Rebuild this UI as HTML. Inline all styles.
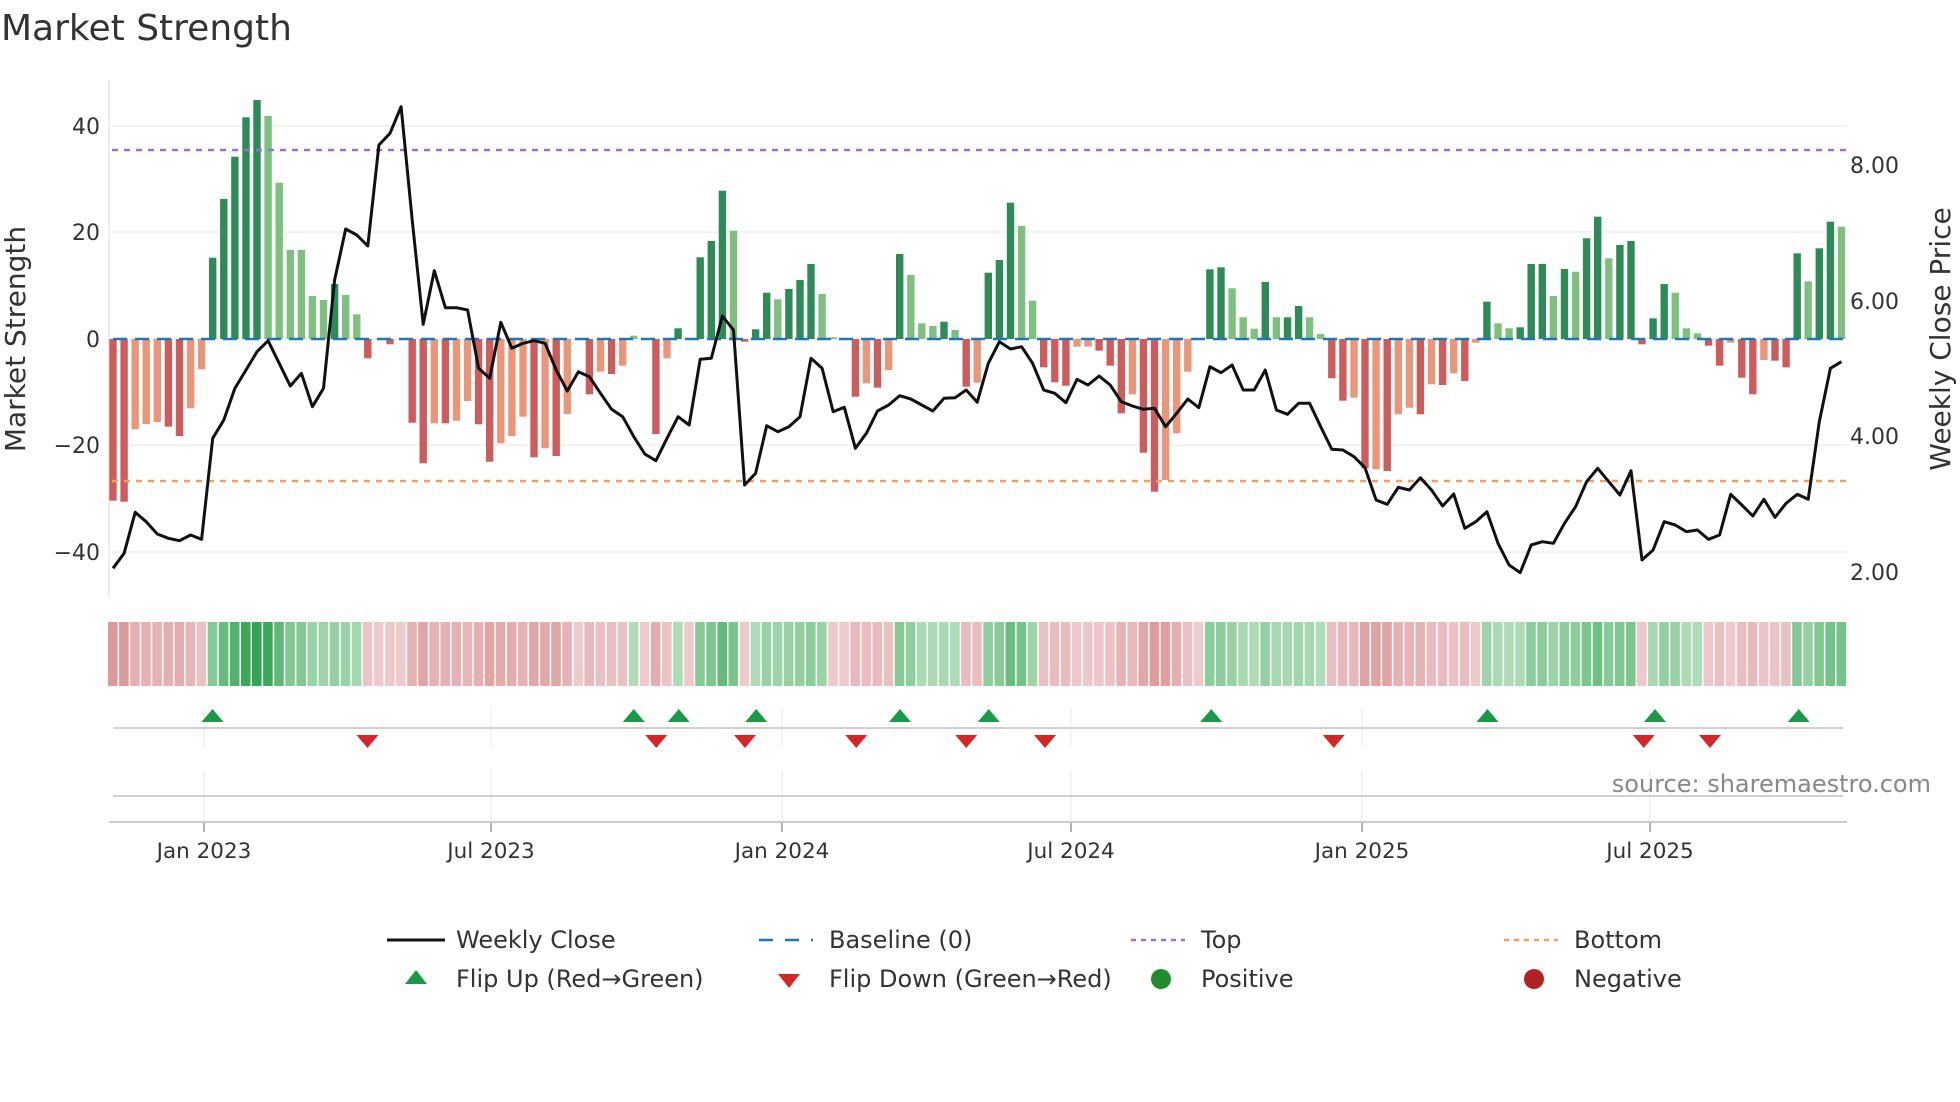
<!DOCTYPE html>
<html><head><meta charset="utf-8"><style>
html,body{margin:0;padding:0;background:#fff;}
svg{display:block;font-family:"DejaVu Sans","Liberation Sans",sans-serif;}
</style></head><body>
<svg id="s" width="1960" height="1102" viewBox="0 0 1960 1102" xmlns="http://www.w3.org/2000/svg">
<text x="1" y="40" font-size="36" fill="#333">Market Strength</text>
<g id="g"></g>
</svg>
<script>
const bars=[[1262,'r'],[1265,'r'],[1048,'o'],[1032,'o'],[1026,'o'],[1040,'r'],[1068,'r'],[985,'o'],[868,'o'],[533,'d'],[357,'d'],[230,'d'],[112,'d'],[60,'d'],[108,'l'],[308,'l'],[510,'l'],[510,'l'],[648,'l'],[660,'l'],[612,'d'],[645,'l'],[703,'l'],[835,'r'],[777,'n'],[793,'r'],[777,'n'],[1028,'r'],[1150,'r'],[1030,'o'],[1030,'r'],[1022,'o'],[963,'o'],[1033,'r'],[1145,'r'],[1090,'o'],[1068,'o'],[1010,'o'],[1132,'r'],[1105,'o'],[1128,'r'],[1002,'o'],[777,'n'],[943,'r'],[875,'o'],[882,'r'],[857,'o'],[767,'l'],[777,'n'],[1062,'r'],[835,'o'],[745,'d'],[777,'n'],[532,'d'],[483,'d'],[332,'d'],[452,'l'],[785,'r'],[748,'d'],[638,'d'],[658,'l'],[627,'d'],[600,'d'],[552,'d'],[642,'l'],[772,'l'],[777,'n'],[950,'r'],[910,'o'],[923,'r'],[870,'o'],[522,'d'],[585,'l'],[730,'l'],[738,'l'],[725,'d'],[750,'l'],[920,'r'],[908,'o'],[578,'d'],[540,'d'],[368,'d'],[438,'l'],[662,'l'],[862,'r'],[907,'r'],[917,'r'],[800,'o'],[800,'o'],[812,'r'],[857,'r'],[1000,'r'],[943,'o'],[1118,'r'],[1235,'r'],[1200,'o'],[1060,'o'],[875,'o'],[777,'n'],[568,'d'],[562,'d'],[625,'l'],[712,'l'],[746,'l'],[606,'d'],[712,'l'],[712,'d'],[678,'d'],[712,'l'],[762,'l'],[895,'r'],[962,'r'],[953,'o'],[1165,'r'],[1168,'o'],[1173,'r'],[1003,'o'],[983,'o'],[1003,'r'],[913,'o'],[915,'r'],[880,'o'],[903,'r'],[788,'o'],[665,'d'],[730,'l'],[745,'l'],[742,'d'],[552,'d'],[552,'d'],[648,'l'],[567,'d'],[575,'l'],[475,'d'],[410,'d'],[535,'l'],[495,'d'],[483,'d'],[793,'r'],[715,'d'],[612,'d'],[638,'l'],[745,'l'],[760,'l'],[797,'r'],[857,'r'],[788,'o'],[893,'r'],[943,'r'],[840,'o'],[842,'r'],[862,'r'],[520,'d'],[604,'l'],[505,'d'],[425,'d'],[440,'l']];
const line=[1465,1420,1297,1325,1362,1375,1382,1365,1378,1075,1020,925,870,815,782,850,918,880,980,925,600,447,465,498,195,160,80,420,733,572,683,683,690,865,895,727,805,790,782,790,870,933,875,890,940,988,1010,1070,1122,1142,1075,1010,1035,838,835,708,750,1215,1180,1037,1055,1040,1010,835,865,995,982,1105,1060,993,975,947,957,975,993,955,953,930,967,850,785,807,800,850,930,940,968,898,915,888,915,965,978,988,985,1040,1000,957,983,860,878,855,930,930,870,990,1003,970,970,1040,1108,1110,1130,1163,1260,1273,1222,1230,1193,1230,1278,1242,1345,1325,1295,1390,1455,1478,1395,1385,1390,1330,1280,1205,1165,1205,1245,1172,1440,1410,1325,1335,1355,1350,1378,1365,1243,1275,1308,1258,1312,1270,1243,1258,1025,865,845];
const col={r:'#cd5c5c',o:'#e9967a',d:'#2e8b57',l:'#7fbf7f'};
const X=i=>113+i*11.08;
let h='';
const L=109,R=1847;
[126,232,339,445,552].forEach(y=>h+=`<line x1="${L}" x2="${R}" y1="${y}" y2="${y}" stroke="#eceff3" stroke-width="1.5"/>`);
h+=`<line x1="${L}" x2="${L}" y1="80" y2="598" stroke="#e6e9ee" stroke-width="1.5"/>`;
[['40',126],['20',232],['0',339],['\u221220',445],['\u221240',552]].forEach(([t,y])=>h+=`<text x="100" y="${y+8}" font-size="22" fill="#333" text-anchor="end">${t}</text>`);
[['8.00',165],['6.00',301],['4.00',436],['2.00',572]].forEach(([t,y])=>h+=`<text x="1850" y="${y+8}" font-size="22" fill="#333">${t}</text>`);
h+=`<text transform="translate(25,339) rotate(-90)" font-size="28" fill="#333" text-anchor="middle">Market Strength</text>`;
h+=`<text transform="translate(1950,339) rotate(-90)" font-size="28" fill="#333" text-anchor="middle">Weekly Close Price</text>`;
bars.forEach(([zy,c],i)=>{if(c==='n')return;const y=80+zy/3;const x=X(i)-3.7;const t=Math.min(y,339),hh=Math.abs(y-339);h+=`<rect x="${x.toFixed(1)}" y="${t.toFixed(1)}" width="7.4" height="${Math.max(hh,1.5).toFixed(1)}" fill="${col[c]}"/>`;});
h+=`<line x1="${L+4}" x2="${R-4}" y1="339" y2="339" stroke="#1f77b4" stroke-width="2.5" stroke-dasharray="14,8"/>`;
h+=`<line x1="${L+3}" x2="${R}" y1="150" y2="150" stroke="#9b6fd6" stroke-width="2.5" stroke-dasharray="6,6"/>`;
h+=`<line x1="${L+3}" x2="${R}" y1="481" y2="481" stroke="#f0a060" stroke-width="2.5" stroke-dasharray="6,6"/>`;
h+=`<polyline fill="none" stroke="#111" stroke-width="3" stroke-linejoin="round" points="${line.map((v,i)=>X(i).toFixed(1)+','+(80+v/3).toFixed(1)).join(' ')}"/>`;
bars.forEach(([zy,c],i)=>{const v=(777-zy)/3/5.33;let a=Math.min(1,Math.abs(v)/45);let f;
 if(v>=0.5){const k=0.25+a*0.75;f=`rgb(${Math.round(220-k*170)},${Math.round(240-k*75)},${Math.round(222-k*140)})`;}
 else{const k=0.2+a*0.8;f=`rgb(${Math.round(243-k*30)},${Math.round(220-k*90)},${Math.round(222-k*92)})`;}
 h+=`<rect x="${(X(i)-5).toFixed(1)}" y="622" width="9.6" height="64" fill="${f}"/>`;});
const ticks=[['Jan 2023',204],['Jul 2023',491],['Jan 2024',782],['Jul 2024',1071],['Jan 2025',1362],['Jul 2025',1650]];
ticks.forEach(([t,x])=>{h+=`<line x1="${x}" x2="${x}" y1="708" y2="746" stroke="#eef0f3" stroke-width="1.5"/><line x1="${x}" x2="${x}" y1="770" y2="822" stroke="#eef0f3" stroke-width="1.5"/><line x1="${x}" x2="${x}" y1="822" y2="832" stroke="#999" stroke-width="1.5"/><text x="${x}" y="858" font-size="21.5" fill="#333" text-anchor="middle">${t}</text>`;});
h+=`<line x1="113" x2="1843" y1="728" y2="728" stroke="#d0d0d0" stroke-width="2"/>`;
h+=`<line x1="113" x2="1843" y1="796" y2="796" stroke="#d0d0d0" stroke-width="2"/>`;
h+=`<line x1="109" x2="1847" y1="822" y2="822" stroke="#ccc" stroke-width="2"/>`;
[170,507,543,605,720,791,969,1190,1324,1439].forEach(d=>{const x=d*1.25;h+=`<polygon points="${x-11},${722} ${x+11},${722} ${x},${709}" fill="#1a9a47"/>`;});
[294,525,596,685,773,836,1067,1315,1368].forEach(d=>{const x=d*1.25;h+=`<polygon points="${x-11},${735} ${x+11},${735} ${x},${748}" fill="#d62728"/>`;});
h+=`<text x="1931" y="792" font-size="24" fill="#888" text-anchor="end">source: sharemaestro.com</text>`;
const ly1=940,ly2=979,fs=24;
h+=`<line x1="387" x2="445" y1="${ly1}" y2="${ly1}" stroke="#111" stroke-width="3"/><text x="456" y="${ly1+8}" font-size="${fs}" fill="#333">Weekly Close</text>`;
h+=`<line x1="759" x2="813" y1="${ly1}" y2="${ly1}" stroke="#1f77b4" stroke-width="2.5" stroke-dasharray="14,12"/><text x="829" y="${ly1+8}" font-size="${fs}" fill="#333">Baseline (0)</text>`;
h+=`<line x1="1131" x2="1185" y1="${ly1}" y2="${ly1}" stroke="#9b6fd6" stroke-width="2.5" stroke-dasharray="5,5"/><text x="1201" y="${ly1+8}" font-size="${fs}" fill="#333">Top</text>`;
h+=`<line x1="1504" x2="1558" y1="${ly1}" y2="${ly1}" stroke="#f0a060" stroke-width="2.5" stroke-dasharray="5,5"/><text x="1574" y="${ly1+8}" font-size="${fs}" fill="#333">Bottom</text>`;
h+=`<polygon points="405,984 427,984 416,970" fill="#1a9a47"/><text x="456" y="${ly2+8}" font-size="${fs}" fill="#333">Flip Up (Red→Green)</text>`;
h+=`<polygon points="778,974 800,974 789,988" fill="#d62728"/><text x="829" y="${ly2+8}" font-size="${fs}" fill="#333">Flip Down (Green→Red)</text>`;
h+=`<circle cx="1161" cy="${ly2}" r="10" fill="#238b2a"/><text x="1201" y="${ly2+8}" font-size="${fs}" fill="#333">Positive</text>`;
h+=`<circle cx="1534" cy="${ly2}" r="10" fill="#b22222"/><text x="1574" y="${ly2+8}" font-size="${fs}" fill="#333">Negative</text>`;
document.getElementById('g').innerHTML=h;
</script>
</body></html>
